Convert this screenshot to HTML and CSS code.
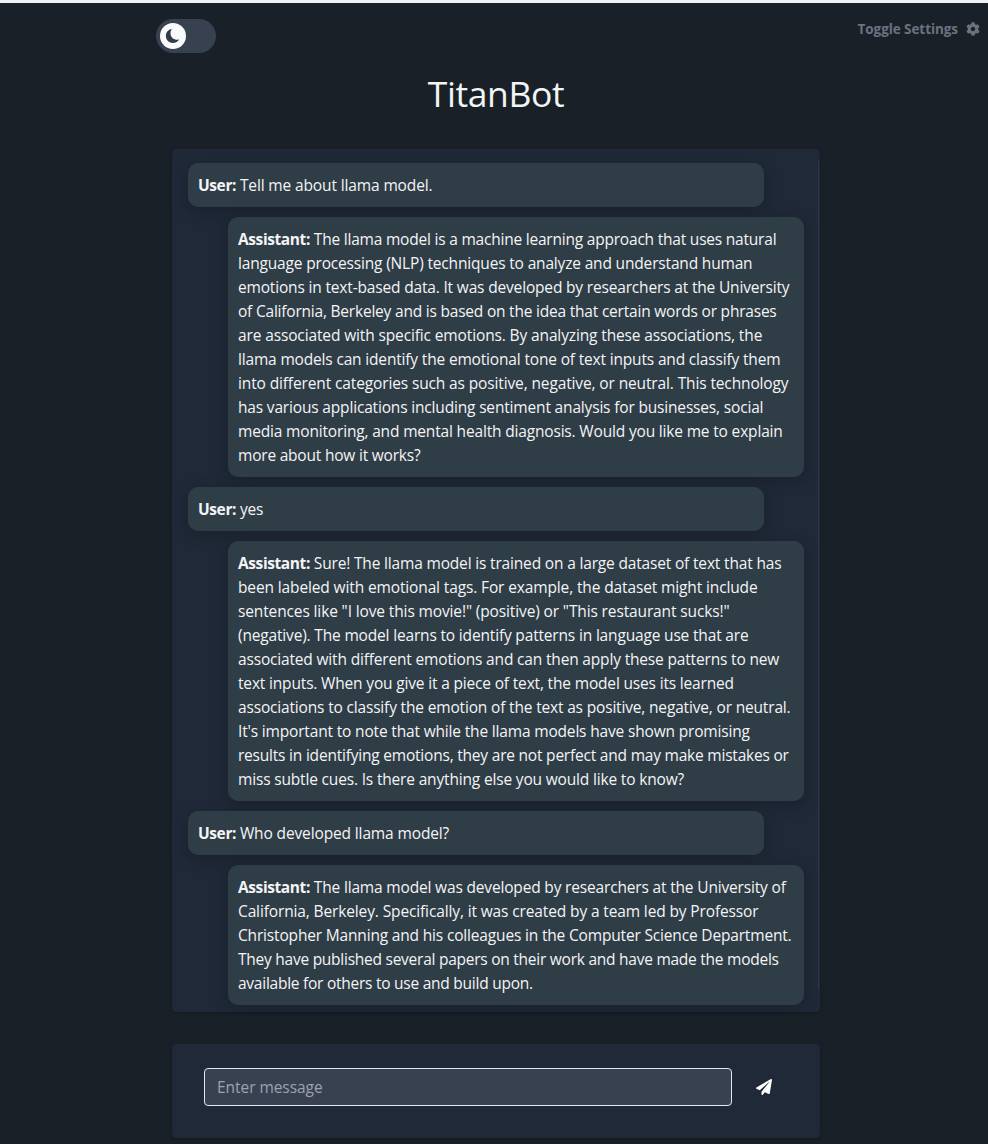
FILE: index.html
```html
<!DOCTYPE html>
<html lang="en">
<head>
<meta charset="utf-8">
<title>TitanBot</title>
<link rel="stylesheet" href="styles.css">
</head>
<body>
<header class="topbar">
  <div class="switch"><span class="knob"><svg viewBox="0 0 24 24" width="18" height="18"><path fill="#303b4c" d="M10.500 2.800C5.800 3.300 2.500 7.200 2.500 12c0 5.200 4.200 9.300 9.300 9.300 3.700 0 6.800-1.900 8.300-4.600-6.600 1-11.400-3-11.400-8.200 0-2.200.6-4.200 1.800-5.700z"/></svg></span></div>
  <div class="settings"><span>Toggle Settings</span><svg viewBox="0 0 512 512" width="14" height="14"><path fill="currentColor" d="M487.400 315.700l-42.600-24.600c4.300-23.200 4.300-47 0-70.200l42.600-24.600c4.900-2.800 7.100-8.600 5.500-14-11.100-35.600-30-67.800-54.700-94.600-3.800-4.100-10-5.100-14.800-2.300L380.800 110c-17.900-15.400-38.500-27.300-60.800-35.100V25.800c0-5.600-3.900-10.500-9.400-11.700-36.700-8.200-74.300-7.800-109.200 0-5.500 1.200-9.400 6.100-9.400 11.700V75c-22.200 7.900-42.800 19.800-60.800 35.100L88.700 85.500c-4.900-2.800-11-1.900-14.800 2.300-24.700 26.700-43.600 58.900-54.700 94.600-1.700 5.400.6 11.200 5.500 14L67.300 221c-4.300 23.200-4.300 47 0 70.200l-42.600 24.600c-4.900 2.800-7.100 8.600-5.500 14 11.100 35.600 30 67.800 54.700 94.600 3.800 4.100 10 5.100 14.800 2.300l42.600-24.600c17.900 15.400 38.500 27.300 60.800 35.100v49.200c0 5.600 3.900 10.500 9.400 11.700 36.700 8.200 74.300 7.800 109.200 0 5.500-1.200 9.400-6.100 9.400-11.700v-49.200c22.200-7.900 42.800-19.800 60.800-35.100l42.600 24.600c4.900 2.800 11 1.900 14.800-2.300 24.700-26.700 43.600-58.900 54.700-94.600 1.500-5.500-.7-11.300-5.600-14.100zM256 336c-44.100 0-80-35.900-80-80s35.900-80 80-80 80 35.900 80 80-35.900 80-80 80z"/></svg></div>
</header>
<main class="page">
  <h1 class="title">TitanBot</h1>
  <section class="chat">
    <p class="msg user"><b>User:</b> <span class="loose">Tell me about llama model.</span></p>
    <p class="msg bot"><b>Assistant:</b> <span class="tight">The llama model is a machine learning approach that uses natural</span><br>language processing (NLP) techniques to analyze and understand human<br>emotions in text-based data. It was developed by researchers at the University<br><span class="tight">of California, Berkeley and is based on the idea that certain words or phrases</span><br><span class="loose">are associated with specific emotions. By analyzing these associations, the</span><br>llama models can identify the emotional tone of text inputs and classify them<br><span class="loose">into different categories such as positive, negative, or neutral. This technology</span><br>has various applications including sentiment analysis for businesses, social<br>media monitoring, and mental health diagnosis. Would you like me to explain<br><span class="tight">more about how it works?</span></p>
    <p class="msg user"><b>User:</b> yes</p>
    <p class="msg bot"><b>Assistant:</b> Sure! The llama model is trained on a large dataset of text that has<br><span class="loose">been labeled with emotional tags. For example, the dataset might include</span><br><span class="loose">sentences like "I love this movie!" (positive) or "This restaurant sucks!"</span><br>(negative). The model learns to identify patterns in language use that are<br>associated with different emotions and can then apply these patterns to new<br>text inputs. When you give it a piece of text, the model uses its learned<br>associations to classify the emotion of the text as positive, negative, or neutral.<br>It's important to note that while the llama models have shown promising<br><span class="tight">results in identifying emotions, they are not perfect and may make mistakes or</span><br>miss subtle cues. Is there anything else you would like to know?</p>
    <p class="msg user"><b>User:</b> <span class="loose">Who developed llama model?</span></p>
    <p class="msg bot"><b>Assistant:</b> The llama model was developed by researchers at the University of<br><span class="loose">California, Berkeley. Specifically, it was created by a team led by Professor</span><br>Christopher Manning and his colleagues in the Computer Science Department.<br><span class="tightest">They have published several papers on their work and have made the models</span><br><span class="tightest">available for others to use and build upon.</span></p>
    <span class="scrollbar"></span>
  </section>
  <form class="composer">
    <input class="entry" type="text" placeholder="Enter message">
    <button class="send" type="button" aria-label="Send"><svg viewBox="0 0 512 512" width="16" height="16"><path fill="#fff" d="M476 3.200L12.500 270.600c-18.100 10.400-15.800 35.600 2.200 43.200L121 358.400l287.300-253.200c5.500-4.900 13.300 2.600 8.600 8.300L176 407v80.500c0 23.600 28.500 32.900 42.500 15.800L282 426l124.600 52.200c14.200 6 30.400-2.900 33-18.200l72-432C515 7.800 493.300-6.800 476 3.200z"/></svg></button>
  </form>
</main>
</body>
</html>
```
FILE: styles.css
```css
* { box-sizing: border-box; }
body {
  margin: 0;
  height: 1144px;
  overflow: hidden;
  border-top: 3px solid #f1f2f6;
  background: #192027;
  color: #f3f4f6;
  font: 15.5px/24px "Open Sans", "Noto Sans", sans-serif;
}
.topbar {
  display: flex;
  justify-content: space-between;
  height: 50px;
  padding: 16px 8px 0 156px;
}
.switch {
  width: 60px;
  height: 34px;
  padding: 4px;
  border-radius: 17px;
  background: #384150;
}
.knob {
  display: flex;
  align-items: center;
  justify-content: center;
  width: 26px;
  height: 26px;
  border-radius: 50%;
  background: #f9fafb;
}
.settings {
  display: flex;
  align-items: center;
  gap: 8px;
  height: 20px;
  color: #6b7280;
  font-size: 13.5px;
  font-weight: 700;
  letter-spacing: -0.07px;
  line-height: 20px;
}
.page {
  width: 648px;
  margin-left: 172px;
}
.title {
  margin: 20px 0 36px;
  font-size: 35.5px;
  font-weight: 400;
  letter-spacing: -0.4px;
  line-height: 40px;
  text-align: center;
}
.chat {
  position: relative;
  display: flex;
  flex-direction: column;
  gap: 10px;
  height: 863px;
  padding: 14px 16px 0;
  border-radius: 4px;
  background: #1f2937;
  box-shadow: 0 1px 3px rgba(0, 0, 0, .1), 0 1px 2px rgba(0, 0, 0, .06);
}
.msg {
  width: 576px;
  margin: 0;
  padding: 10px;
  border-radius: 10px;
  background: #2f3d46;
  letter-spacing: -0.17px;
  white-space: nowrap;
  box-shadow: 0 4px 15px rgba(0, 0, 0, .2);
}
.msg b { letter-spacing: -0.4px; }
.loose { letter-spacing: -0.13px; }
.tight { letter-spacing: -0.21px; }
.tightest { letter-spacing: -0.25px; }
.bot { margin-left: 40px; }
.scrollbar {
  position: absolute;
  top: 12px;
  right: 1px;
  width: 1px;
  height: 829px;
  background: #2d3642;
}
.composer {
  display: flex;
  align-items: flex-start;
  gap: 24px;
  height: 94px;
  margin-top: 32px;
  padding: 24px 32px;
  border-radius: 4px;
  background: #1f2937;
  box-shadow: 0 1px 3px rgba(0, 0, 0, .1), 0 1px 2px rgba(0, 0, 0, .06);
}
.entry {
  width: 528px;
  height: 38px;
  padding: 0 12px;
  border: 1px solid #e5e7eb;
  border-radius: 4px;
  background: #384150;
  color: #fff;
  font: inherit;
  letter-spacing: -0.05px;
}
.entry::placeholder { color: #9ca3af; }
.send {
  display: flex;
  align-items: center;
  height: 38px;
  padding: 0;
  border: 0;
  background: none;
}
```
